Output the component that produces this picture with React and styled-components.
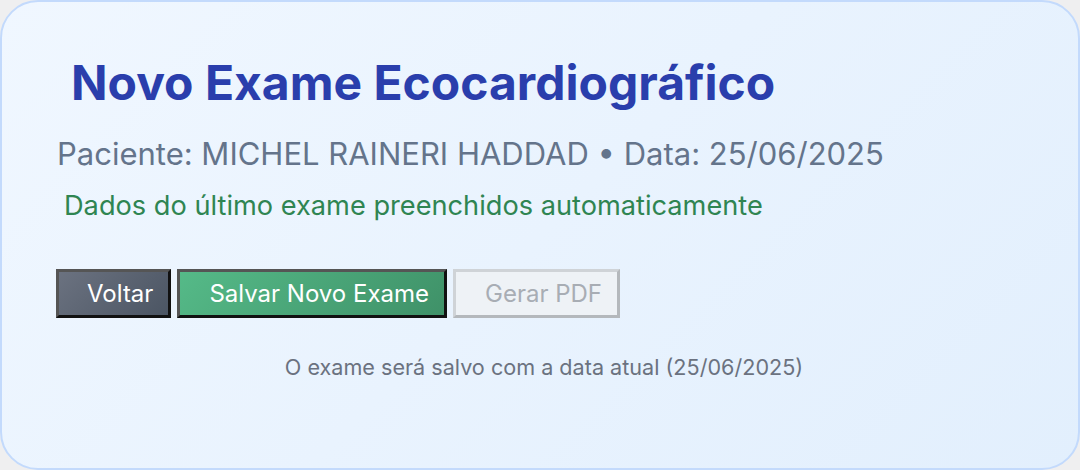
import React from "react";
import styled, { createGlobalStyle } from "styled-components";

const GlobalStyle = createGlobalStyle`
  html, body {
    margin: 0;
    padding: 0;
    background: #efeff0;
  }
  body {
    font-family: Inter, "Noto Sans", sans-serif;
  }
`;

const Card = styled.div`
  box-sizing: border-box;
  width: 1080px;
  height: 470px;
  border: 2px solid #c3dafc;
  border-radius: 38px;
  background: linear-gradient(135deg, #f0f7ff 0%, #e2effd 100%);
  padding: 52px 54px 0 54px;
  display: flex;
  flex-direction: column;
`;

const Title = styled.h1`
  margin: 0;
  padding-left: 15px;
  font-size: 48px;
  line-height: 58px;
  font-weight: 700;
  color: #2a3eac;
`;

const Subtitle = styled.p`
  margin: 23px 0 0 1px;
  font-size: 31px;
  line-height: 38px;
  color: #64748b;
`;

const AutoNote = styled.p`
  margin: 16px 0 0 0;
  padding-left: 8px;
  font-size: 27.2px;
  line-height: 34px;
  color: #2f8552;
`;

const Actions = styled.div`
  display: flex;
  gap: 6px;
  margin-top: 46px;
`;

const Button = styled.button`
  box-sizing: border-box;
  height: 49px;
  padding: 0 15px 0 ${p => p.$lead || 29}px;
  font-family: Inter, "Noto Sans", sans-serif;
  font-size: 24px;
  border-width: 3px;
  border-style: solid;
  border-color: ${p => p.$edgeLight} ${p => p.$edgeDark} ${p => p.$edgeDark} ${p => p.$edgeLight};
  background: ${p => p.$bg};
  color: ${p => p.$fg};
  cursor: pointer;
`;

const Footer = styled.p`
  margin: 35px 0 0 0;
  padding-left: 8px;
  text-align: center;
  font-size: 21.6px;
  line-height: 28px;
  color: #6b7280;
`;

export default function App() {
  return (
    <>
      <GlobalStyle />
      <Card>
        <Title>Novo Exame Ecocardiográfico</Title>
        <Subtitle>Paciente: MICHEL RAINERI HADDAD • Data: 25/06/2025</Subtitle>
        <AutoNote>Dados do último exame preenchidos automaticamente</AutoNote>
        <Actions>
          <Button
            $lead={28}
            $bg="linear-gradient(135deg, #6b7280, #4b5563)"
            $fg="#ffffff"
            $edgeLight="#555555"
            $edgeDark="#111111"
          >
            Voltar
          </Button>
          <Button
            $bg="linear-gradient(135deg, #55ba88, #3f9168)"
            $fg="#ffffff"
            $edgeLight="#555555"
            $edgeDark="#111111"
          >
            Salvar Novo Exame
          </Button>
          <Button
            disabled
            $bg="#eef2f6"
            $fg="#a8adb4"
            $edgeLight="#cfd3d7"
            $edgeDark="#b4b8bc"
          >
            Gerar PDF
          </Button>
        </Actions>
        <Footer>O exame será salvo com a data atual (25/06/2025)</Footer>
      </Card>
    </>
  );
}
